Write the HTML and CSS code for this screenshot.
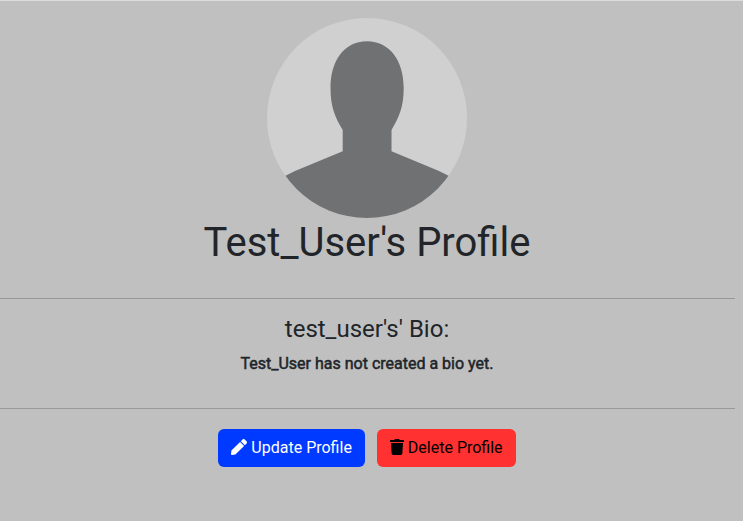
FILE: index.html
```
<!DOCTYPE html>
<html lang="en">
<head>
<meta charset="utf-8">
<title>Profile</title>
<link rel="stylesheet" href="styles.css">
</head>
<body>
<main class="profile">
  <svg class="avatar" viewBox="0 0 200 200" aria-hidden="true">
    <defs><clipPath id="round"><circle cx="100" cy="100" r="100"/></clipPath></defs>
    <g clip-path="url(#round)">
      <rect width="200" height="200" fill="#d0d0d0"/>
      <path fill="#707173" d="M100 23.300C123 23.300 136.700 43 136.700 70C136.700 89 132 99 124.500 112V133.300L172 153Q182 157.500 190 163V200H10V163Q18 157.500 28 153L75.700 133.300V112C68 99 63.500 89 63.500 70C63.500 43 77 23.300 100 23.300Z"/>
    </g>
  </svg>
  <h1 class="title">Test_User's Profile</h1>
  <hr class="rule rule-top">
  <h2 class="bio-title">test_user's' Bio:</h2>
  <p class="bio">Test_User has not created a bio yet.</p>
  <hr class="rule">
  <div class="actions">
    <a class="btn btn-update"><svg class="icon" viewBox="0 0 512 512"><path fill="currentColor" d="M290.740 93.240l128.020 128.020-277.990 277.990-114.140 12.600C11.350 513.540-1.560 500.620.140 485.340l12.700-114.220 277.900-277.880zm207.200-19.060l-60.110-60.110c-18.750-18.750-49.160-18.750-67.910 0l-56.550 56.550 128.020 128.020 56.550-56.550c18.750-18.760 18.750-49.160 0-67.910z"/></svg> Update Profile</a>
    <a class="btn btn-delete"><svg class="icon icon-trash" viewBox="0 0 448 512"><path fill="currentColor" d="M432 32H312l-9.400-18.700A24 24 0 0 0 281.100 0H166.800a23.720 23.720 0 0 0-21.400 13.300L136 32H16A16 16 0 0 0 0 48v32a16 16 0 0 0 16 16h416a16 16 0 0 0 16-16V48a16 16 0 0 0-16-16zM53.200 467a48 48 0 0 0 47.900 45h245.800a48 48 0 0 0 47.900-45L416 128H32z"/></svg> Delete Profile</a>
  </div>
</main>
</body>
</html>
```
FILE: styles.css
```
* { box-sizing: border-box; }
html { background: #c0c0c0; }
body {
  margin: 0 8px 0 0;
  color: #212529;
  font: 400 16px/1.5 Roboto, sans-serif;
  text-align: center;
}
html::before {
  content: "";
  display: block;
  height: 1px;
  background: #dcdcdc;
}
.profile { padding-top: 17px; }
.avatar { display: block; width: 200px; height: 200px; margin: 0 auto; position: relative; left: -0.5px; }
.title { margin: 0; padding: 1px 1px 0 0; font-size: 40px; font-weight: 400; line-height: 48px; }
.rule { height: 1px; margin: 16px 0; border: 0; background: #979899; }
.rule-top { margin-top: 31px; }
.bio-title { margin: 0 0 8px; padding-right: 1px; font-size: 24px; font-weight: 400; line-height: 29px; }
.bio { margin: 0 0 32px; padding-right: 1px; -webkit-text-stroke: 0.5px currentColor; }
.actions { display: flex; justify-content: center; gap: 12px; padding: 4px 1px 0 0; }
.btn {
  height: 38px;
  padding: 7px 13px;
  border-radius: 6px;
  white-space: nowrap;
}
.btn-update { background: #0039ff; color: #fff; }
.btn-delete { background: #ff3131; color: #000; }
.icon { width: 16px; height: 16px; vertical-align: -2px; }
.icon-trash { width: 14px; }
```
